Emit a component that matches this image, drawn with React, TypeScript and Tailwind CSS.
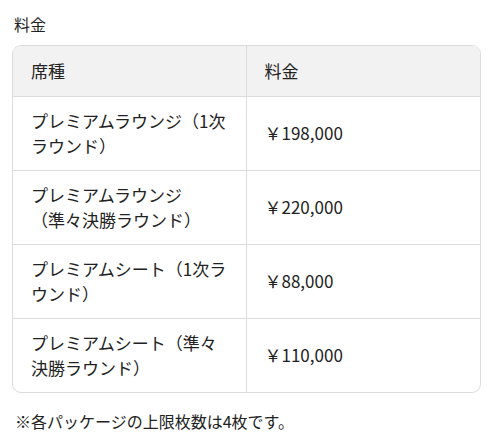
import React from "react";

const rows: [string, string][] = [
  ["プレミアムラウンジ（1次ラウンド）", "￥198,000"],
  ["プレミアムラウンジ（準々決勝ラウンド）", "￥220,000"],
  ["プレミアムシート（1次ラウンド）", "￥88,000"],
  ["プレミアムシート（準々決勝ラウンド）", "￥110,000"],
];

export default function App() {
  return (
    <div
      className="w-[490px] h-[444px] bg-white pt-[12px] pl-[12px] text-[#222222]"
      style={{ fontFamily: '"Noto Sans CJK JP", "Noto Sans", sans-serif' }}
    >
      <div className="text-[16px] leading-[24px] pl-[2px]">料金</div>
      <div className="mt-[9px] w-[469px] border border-[#dcdcdc] rounded-[9px] overflow-hidden">
        <div className="grid grid-cols-2 bg-[#f2f2f2] text-[17px] leading-[25.5px]">
          <div className="px-[18px] py-[12px] border-r border-[#dcdcdc]">席種</div>
          <div className="px-[18px] py-[12px]">料金</div>
        </div>
        {rows.map(([seat, price]) => (
          <div
            key={seat}
            className="grid grid-cols-2 border-t border-[#dcdcdc] text-[17px] leading-[25.5px]"
          >
            <div className="px-[18px] py-[11px] border-r border-[#dcdcdc]">{seat}</div>
            <div className="px-[18px] py-[11px] flex items-center">{price}</div>
          </div>
        ))}
      </div>
      <div className="mt-[16px] text-[16px] leading-[24px] pl-[3px]">
        ※各パッケージの上限枚数は4枚です。
      </div>
    </div>
  );
}
